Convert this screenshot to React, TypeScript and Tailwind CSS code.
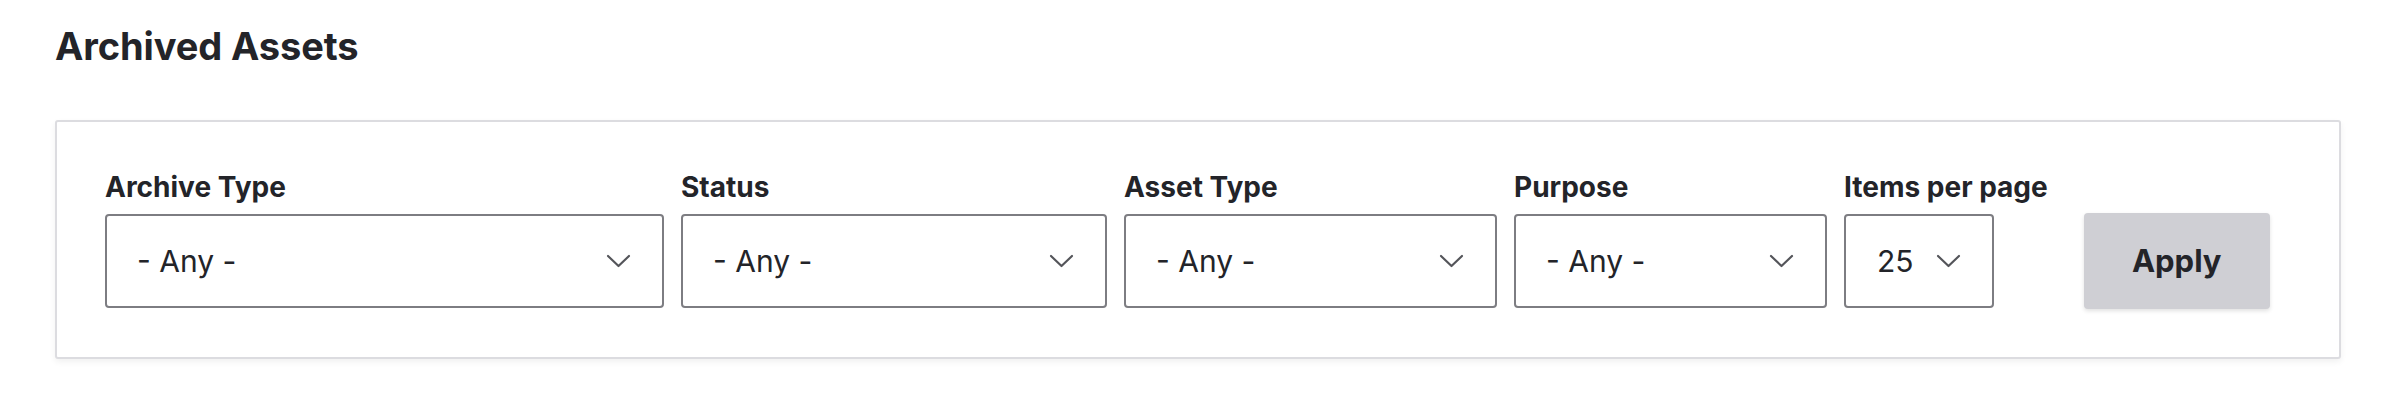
import React from "react";

const Chevron = () => (
  <svg width="25" height="14" viewBox="0 0 25 14" fill="none" className="shrink-0">
    <path d="M2 2l10.5 10L23 2" stroke="#54555a" strokeWidth="2.2" strokeLinecap="round" strokeLinejoin="round" />
  </svg>
);

const fields = [
  { label: "Archive Type", value: "- Any -", w: "w-[559px]" },
  { label: "Status", value: "- Any -", w: "w-[426px]" },
  { label: "Asset Type", value: "- Any -", w: "w-[373px]" },
  { label: "Purpose", value: "- Any -", w: "w-[313px]" },
];

export default function App() {
  return (
    <div className="min-h-[396px] bg-white px-[55px] pt-[23px] text-[#232429] [font-family:Inter,'Noto_Sans',sans-serif]">
      <h1 className="text-[38px] font-bold leading-[46px] tracking-[-0.1px]">Archived Assets</h1>
      <div className="mt-[51px] w-[2286px] rounded-[3px] border-2 border-[#dcdce0] bg-white px-[48px] pt-[48px] pb-[49px] shadow-[0_3px_6px_rgba(0,0,0,0.06)]">
        <div className="flex items-end gap-[17px]">
          {fields.map((f) => (
            <div key={f.label} className="flex flex-col">
              <label className="mb-[10px] whitespace-nowrap text-[28px] font-bold leading-[34px]">{f.label}</label>
              <div className={`${f.w} flex h-[94px] items-center justify-between rounded-[4px] border-2 border-[#7d7d82] pl-[30px] pr-[31px]`}>
                <span className="text-[30px] leading-none">{f.value}</span>
                <Chevron />
              </div>
            </div>
          ))}
          <div className="flex flex-col">
            <label className="mb-[10px] whitespace-nowrap text-[28px] font-bold leading-[34px]">Items per page</label>
            <div className="flex h-[94px] w-[150px] items-center gap-[22px] rounded-[4px] border-2 border-[#7d7d82] pl-[31px]">
              <span className="text-[30px] leading-none">25</span>
              <Chevron />
            </div>
          </div>
          <button className="ml-[19px] mb-[-1px] flex h-[96px] w-[186px] items-center justify-center rounded-[4px] bg-[#cfcfd4] text-[31px] font-bold shadow-[0_2px_4px_rgba(0,0,0,0.12)]">
            Apply
          </button>
        </div>
      </div>
    </div>
  );
}
